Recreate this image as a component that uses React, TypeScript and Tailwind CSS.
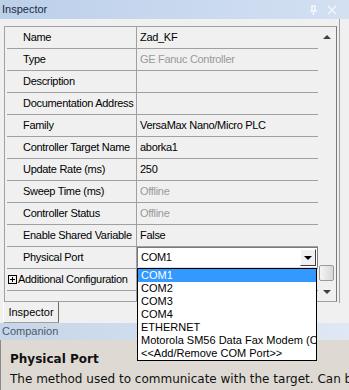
import { Fragment } from "react";

type Row = {
  label: string;
  value?: string;
  dim?: boolean;
  combo?: boolean;
  expand?: boolean;
};

const ROWS: Row[] = [
  { label: "Name", value: "Zad_KF" },
  { label: "Type", value: "GE Fanuc Controller", dim: true },
  { label: "Description" },
  { label: "Documentation Address" },
  { label: "Family", value: "VersaMax Nano/Micro PLC" },
  { label: "Controller Target Name", value: "aborka1" },
  { label: "Update Rate (ms)", value: "250" },
  { label: "Sweep Time (ms)", value: "Offline", dim: true },
  { label: "Controller Status", value: "Offline", dim: true },
  { label: "Enable Shared Variable", value: "False" },
  { label: "Physical Port", combo: true },
  { label: "Additional Configuration", expand: true },
  { label: "" },
];

const PORTS = ["COM1", "COM2", "COM3", "COM4", "ETHERNET", "Motorola SM56 Data Fax Modem (COM3)", "<<Add/Remove COM Port>>"];

function PinIcon() {
  return (
    <svg width="9" height="10" viewBox="0 0 9 10" className="text-white">
      <path d="M2 1h5M3 1v5M6 1v5M1 6h7M4.5 6v4" stroke="currentColor" strokeWidth="1.2" fill="none" />
    </svg>
  );
}

function CloseIcon() {
  return (
    <svg width="10" height="10" viewBox="0 0 10 10" className="text-white/80">
      <path d="M1 1l8 8M9 1l-8 8" stroke="currentColor" strokeWidth="1.1" fill="none" />
    </svg>
  );
}

function Tri({ up = false, cls = "border-t-black" }: { up?: boolean; cls?: string }) {
  return up ? (
    <div className="h-0 w-0 border-x-[4px] border-b-[4px] border-x-transparent border-b-[#404040]" />
  ) : (
    <div className={`h-0 w-0 border-x-[4px] border-t-[4px] border-x-transparent ${cls}`} />
  );
}

function PlusBox() {
  return (
    <svg width="9" height="9" viewBox="0 0 9 9" className="mr-[1px] shrink-0">
      <rect x="0.5" y="0.5" width="8" height="8" fill="none" stroke="#000" />
      <path d="M2 4.5h5M4.5 2v5" stroke="#000" />
    </svg>
  );
}

export default function App() {
  return (
    <div
      className="relative flex h-[390px] w-[349px] flex-col overflow-hidden bg-[#f0f0f0] text-[11px] text-black"
      style={{ fontFamily: '"Liberation Sans", Arial, sans-serif' }}
    >
      {/* title bar */}
      <div className="flex h-[19px] shrink-0 items-center justify-between bg-gradient-to-r from-[#bcd0ea] to-[#d3e0f2] pl-[2px] pr-[12px]">
        <span className="text-[11px] text-[#1b2a3c]">Inspector</span>
        <div className="flex items-center gap-[9px]">
          <PinIcon />
          <CloseIcon />
        </div>
      </div>

      {/* panel body */}
      <div className="h-[284px] w-[340px] shrink-0 border-r border-[#a0a0a0] pl-[4px] pt-[7px]">
        <div className="flex h-[276px] w-[333px] border border-[#a0a0a0] border-r-[#7a7a7a]">
          <div className="w-[313px] overflow-hidden pl-[2px] tracking-[-0.3px]">
            {ROWS.map((r, i) => (
              <div key={i} className="flex h-[22px] w-[311px] border-b border-[#a0a0a0]">
                <div className="flex w-[130px] shrink-0 items-center overflow-hidden whitespace-nowrap border-r border-[#a0a0a0] pl-[16px]">
                  {r.expand ? (
                    <span className="-ml-[15px] flex items-center">
                      <PlusBox />
                      {r.label}
                    </span>
                  ) : (
                    r.label
                  )}
                </div>
                {r.combo ? (
                  <div className="flex flex-1 items-center justify-between border border-[#7a7a7a] border-b-[#e0e0e0] bg-white pl-[3px]">
                    <span>COM1</span>
                    <div className="mr-[1px] flex h-[17px] w-[16px] items-center justify-center border border-[#fff] border-b-[#404040] border-r-[#404040] bg-[#f0f0f0]">
                      <Tri />
                    </div>
                  </div>
                ) : (
                  <div
                    className={`flex flex-1 items-center overflow-hidden whitespace-nowrap pl-[3px] ${
                      r.dim ? "text-[#9a9a9a]" : ""
                    }`}
                  >
                    {r.value}
                  </div>
                )}
              </div>
            ))}
          </div>
          {/* scrollbar */}
          <div className="flex w-[17px] flex-col items-center">
            <div className="flex h-[18px] w-full items-center justify-center pt-[2px]">
              <Tri up />
            </div>
            <div className="flex-1" />
            <div className="mb-[1px] h-[16px] w-[15px] rounded-[2px] border border-[#9a9a9a] bg-gradient-to-r from-[#f4f4f4] to-[#d8d8d8]" />
            <div className="flex h-[19px] w-full items-center justify-center">
              <Tri cls="border-t-[#404040]" />
            </div>
          </div>
        </div>
      </div>

      {/* tab strip */}
      <div className="flex h-[20px] shrink-0 items-end">
        <div className="-mt-[2px] ml-[3px] flex h-[21px] w-[56px] items-center justify-center border-b border-l border-r border-b-[#a0a0a0] border-l-white border-r-[#6a6a6a] bg-[#f0f0f0] text-[11px]">
          Inspector
        </div>
        <div className="h-full flex-1" />
      </div>

      {/* companion */}
      <div className="flex h-[17px] shrink-0 items-center bg-gradient-to-r from-[#c6d5e8] to-[#dfe8f4] pl-[2px] text-[#4b5b6e]">
        Companion
      </div>
      <div
        className="flex-1 whitespace-nowrap border-l border-[#8a8a8a] bg-[#dedad3] pl-[9px] pt-[9px] text-[12px] leading-[20px] text-[#111]"
        style={{ fontFamily: '"DejaVu Sans", Verdana, sans-serif' }}
      >
        <div className="font-bold">Physical Port</div>
        <div>The method used to communicate with the target. Can be</div>
      </div>

      {/* dropdown popup */}
      <div className="absolute left-[137px] top-[268px] w-[180px] overflow-hidden border border-black bg-white">
        {PORTS.map((p, i) => (
          <Fragment key={p}>
            <div
              className={`h-[13px] whitespace-nowrap pl-[3px] leading-[13px] ${
                i === 0 ? "bg-[#3399ff] text-white" : ""
              }`}
            >
              {p}
            </div>
          </Fragment>
        ))}
      </div>
    </div>
  );
}
